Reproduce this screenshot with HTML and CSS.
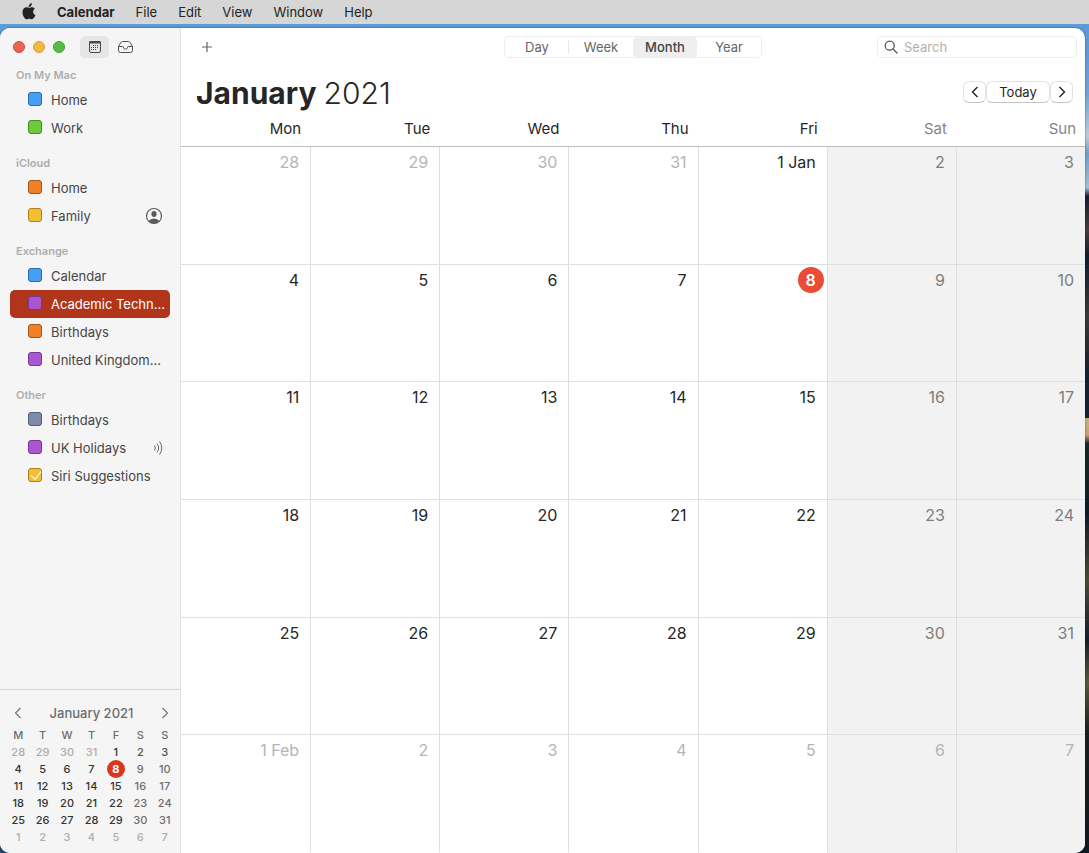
FILE: index.html
```html
<!DOCTYPE html>
<html lang="en-GB">

<head>
    <meta charset="UTF-8">
    <meta name="viewport" content="width=device-width, initial-scale=1">
    <title>Calendar</title>
    <link rel="stylesheet" href="styles.css">
</head>

<body>
    <nav class="menubar">
        <a href="#" class="apple" aria-label="Apple menu">
            <svg width="14" height="17" viewBox="0 0 14 17">
                <path d="M9.9 0.3c0.1 1-0.3 2-0.9 2.7C8.400 3.700 7.500 4.200 6.600 4.100 6.500 3.200 6.900 2.200 7.500 1.500 8.100 0.800 9.100 0.300 9.900 0.300z" />
                <path d="M7.200 4.900c0.700 0 1.500-0.700 2.800-0.700 1.200 0 2.300 0.600 2.900 1.600-2.600 1.500-2.200 5.100 0.500 6.200-0.600 1.700-2 4.300-3.500 4.300-1 0-1.400-0.600-2.600-0.600s-1.600 0.600-2.500 0.600C2.900 16.300 0.500 12.500 0.500 9.200c0-3.200 2-4.900 4-4.900 1.200 0 2.100 0.600 2.700 0.600z" />
            </svg>
        </a>
        <a href="#" class="app-name">Calendar</a>
        <a href="#">File</a>
        <a href="#">Edit</a>
        <a href="#">View</a>
        <a href="#">Window</a>
        <a href="#">Help</a>
    </nav>

    <div class="window">
        <aside class="sidebar">
            <div class="sidebar-head">
                <button type="button" class="light close" aria-label="Close"></button>
                <button type="button" class="light minimise" aria-label="Minimise"></button>
                <button type="button" class="light zoom" aria-label="Zoom"></button>
                <button type="button" class="head-btn list on" aria-label="Calendars">
                    <svg width="14" height="14" viewBox="0 0 14 14" fill="none" stroke="#4a4a4a">
                        <rect x="1.500" y="1.500" width="11" height="11" rx="1.500" />
                        <path d="M1 2.500h12" stroke-width="2" />
                        <path d="M5 5.500h6M3 7.500h8M3 9.500h6" stroke-dasharray="1 1" />
                    </svg>
                </button>
                <button type="button" class="head-btn" aria-label="Inbox">
                    <svg width="17" height="14" viewBox="0 0 17 14" fill="none" stroke="#4f4f4f" stroke-linejoin="round">
                        <path d="M1.500 6.500L3.800 2.600Q4.300 1.500 5.500 1.500h6Q12.700 1.500 13.200 2.600L15.500 6.500V10.500Q15.500 12.500 13.500 12.500h-10Q1.500 12.500 1.500 10.500z" />
                        <path d="M1.500 6.500h4.300q0.400 0 0.500 0.600Q6.700 9.200 8.500 9.200t2.200-2.100q0.100-0.600 0.500-0.600h4.300" />
                    </svg>
                </button>
            </div>

            <div class="lists">
                <section>
                    <h2>On My Mac</h2>
                    <label class="cal blue"><input type="checkbox"><span>Home</span></label>
                    <label class="cal green"><input type="checkbox"><span>Work</span></label>
                </section>
                <section>
                    <h2>iCloud</h2>
                    <label class="cal orange"><input type="checkbox"><span>Home</span></label>
                    <label class="cal yellow"><input type="checkbox"><span>Family</span>
                        <svg class="shared" width="18" height="18" viewBox="0 0 18 18">
                            <circle cx="9" cy="9" r="7.500" fill="none" stroke="#5a5a5a" stroke-width="1.200" />
                            <ellipse cx="9" cy="7" rx="2.600" ry="3" fill="#5a5a5a" />
                            <path d="M3.800 14Q5.200 11.500 9 11.500t5.200 2.500Q12 16.500 9 16.500t-5.200-2.500z" fill="#5a5a5a" />
                        </svg>
                    </label>
                </section>
                <section>
                    <h2>Exchange</h2>
                    <label class="cal blue"><input type="checkbox"><span>Calendar</span></label>
                    <label class="cal purple selected"><input type="checkbox"><span>Academic Techn...</span></label>
                    <label class="cal orange"><input type="checkbox"><span>Birthdays</span></label>
                    <label class="cal purple"><input type="checkbox"><span>United Kingdom...</span></label>
                </section>
                <section>
                    <h2>Other</h2>
                    <label class="cal slate"><input type="checkbox"><span>Birthdays</span></label>
                    <label class="cal purple"><input type="checkbox"><span>UK Holidays</span>
                        <svg class="feed" width="10" height="16" viewBox="0 0 10 16" fill="none" stroke="#666">
                            <path d="M1.500 5.500q1.800 2.500 0 5M4 3.500q3.200 4.500 0 9M6.500 1.500q4.600 6.500 0 13" />
                        </svg>
                    </label>
                    <label class="cal yellow"><input type="checkbox" checked><span>Siri Suggestions</span></label>
                </section>
            </div>

            <div class="mini">
                <div class="mini-head">
                    <button type="button" aria-label="Previous month">
                        <svg width="8" height="12" viewBox="0 0 8 12"><path d="M6.500 1L1.500 6l5 5" /></svg>
                    </button>
                    <span>January 2021</span>
                    <button type="button" aria-label="Next month">
                        <svg width="8" height="12" viewBox="0 0 8 12"><path d="M1.500 1l5 5-5 5" /></svg>
                    </button>
                </div>
                <table>
                    <thead>
                        <tr><th>M</th><th>T</th><th>W</th><th>T</th><th>F</th><th>S</th><th>S</th></tr>
                    </thead>
                    <tbody>
                        <tr><td class="out">28</td><td class="out">29</td><td class="out">30</td><td class="out">31</td><td>1</td><td>2</td><td>3</td></tr>
                        <tr><td>4</td><td>5</td><td>6</td><td>7</td><td><span class="today">8</span></td><td>9</td><td>10</td></tr>
                        <tr><td>11</td><td>12</td><td>13</td><td>14</td><td>15</td><td>16</td><td>17</td></tr>
                        <tr><td>18</td><td>19</td><td>20</td><td>21</td><td>22</td><td>23</td><td>24</td></tr>
                        <tr><td>25</td><td>26</td><td>27</td><td>28</td><td>29</td><td>30</td><td>31</td></tr>
                        <tr><td class="out">1</td><td class="out">2</td><td class="out">3</td><td class="out">4</td><td class="out">5</td><td class="out">6</td><td class="out">7</td></tr>
                    </tbody>
                </table>
            </div>
        </aside>

        <main>
            <div class="toolbar">
                <button type="button" class="add" aria-label="New event">
                    <svg width="12" height="12" viewBox="0 0 12 12"><path d="M6 1v10M1 6h10" stroke="#666" stroke-width="1.200" /></svg>
                </button>
                <div class="views">
                    <button type="button">Day</button>
                    <button type="button">Week</button>
                    <button type="button" class="on">Month</button>
                    <button type="button">Year</button>
                </div>
                <label class="search">
                    <svg width="14" height="14" viewBox="0 0 14 14" fill="none" stroke="#555" stroke-width="1.300" stroke-linecap="round">
                        <circle cx="5.700" cy="5.700" r="4.500" />
                        <path d="M9 9l4 4" />
                    </svg>
                    <input type="search" placeholder="Search" aria-label="Search">
                </label>
            </div>

            <header class="title">
                <h1>January <span>2021</span></h1>
                <div class="nav">
                    <button type="button" aria-label="Previous month">
                        <svg width="8" height="12" viewBox="0 0 8 12"><path d="M6.500 1L1.500 6l5 5" /></svg>
                    </button>
                    <button type="button" class="now">Today</button>
                    <button type="button" aria-label="Next month">
                        <svg width="8" height="12" viewBox="0 0 8 12"><path d="M1.500 1l5 5-5 5" /></svg>
                    </button>
                </div>
            </header>

            <div class="month">
                <table>
                    <thead>
                        <tr><th>Mon</th><th>Tue</th><th>Wed</th><th>Thu</th><th>Fri</th><th>Sat</th><th>Sun</th></tr>
                    </thead>
                    <tbody>
                        <tr><td class="out">28</td><td class="out">29</td><td class="out">30</td><td class="out">31</td><td>1 Jan</td><td>2</td><td>3</td></tr>
                        <tr><td>4</td><td>5</td><td>6</td><td>7</td><td><span class="today">8</span></td><td>9</td><td>10</td></tr>
                        <tr><td>11</td><td>12</td><td>13</td><td>14</td><td>15</td><td>16</td><td>17</td></tr>
                        <tr><td>18</td><td>19</td><td>20</td><td>21</td><td>22</td><td>23</td><td>24</td></tr>
                        <tr><td>25</td><td>26</td><td>27</td><td>28</td><td>29</td><td>30</td><td>31</td></tr>
                        <tr><td class="out">1 Feb</td><td class="out">2</td><td class="out">3</td><td class="out">4</td><td class="out">5</td><td class="out">6</td><td class="out">7</td></tr>
                    </tbody>
                </table>
            </div>
        </main>
    </div>
</body>

</html>
```

FILE: styles.css
```css
* {
    box-sizing: border-box;
}

body {
    margin: 0;
    height: 100vh;
    display: flex;
    flex-direction: column;
    font-family: Inter, "Liberation Sans", sans-serif;
    font-size: 13px;
    color: #262626;
    /* wallpaper: sky, headland, dark hillside */
    background:
        radial-gradient(circle at 0 100%, #1f4a70 0, #1f4a70 20px, transparent 21px),
        linear-gradient(#5b9bd9 0, #5b9bd9 6%, #6ea5d9 11%, #bccbd8 16%, #6d9fcc 18%, #a3bdd5 22%, #16202f 23%, #4a3a3c 27%, #101d2c 30%, #3a3a3a 37%, #14212e 44%, #132230 49%, #c8b27a 49%, #c8a070 51%, #1a2826 52%, #0e1b26 60%, #4b4a35 68%, #12202a 75%, #5e5637 80%, #16201f 86%, #0f1a22 100%);
}

button {
    font: inherit;
    color: inherit;
    padding: 0;
    border: 0;
    background: none;
    display: flex;
    align-items: center;
    justify-content: center;
}

h1,
h2 {
    margin: 0;
}

table {
    width: 100%;
    table-layout: fixed;
    border-collapse: separate;
    border-spacing: 0;
}

th,
td {
    padding: 0;
    font-weight: 400;
}

/* menu bar */
.menubar {
    height: 24px;
    flex: none;
    display: flex;
    align-items: center;
    gap: 21px;
    padding-left: 22px;
    background: #d6d6d6;
}

.menubar a {
    color: #222;
    text-decoration: none;
}

.menubar .apple {
    height: 17px;
    fill: #222;
    margin-bottom: 2px;
}

.menubar .app-name {
    font-weight: 700;
}

.window {
    flex: 1;
    min-height: 0;
    display: flex;
    margin: 4px 4px 0 0;
    border-radius: 10px;
    overflow: hidden;
    background: #fff;
    box-shadow: 0 0 2px rgba(0, 0, 0, 0.5);
}

/* sidebar */
.sidebar {
    width: 181px;
    flex: none;
    display: flex;
    flex-direction: column;
    background: #f5f5f5;
    border-right: 1px solid #e0e0e0;
}

.sidebar-head {
    height: 36px;
    padding: 2px 0 0 13px;
    display: flex;
    align-items: center;
    gap: 8px;
}

.light {
    width: 12px;
    height: 12px;
    border-radius: 50%;
    border: 1px solid #d64a3f;
    background: #ec6255;
}

.minimise {
    border-color: #d9a032;
    background: #f4b740;
}

.zoom {
    border-color: #43a035;
    background: #55bd47;
}

.head-btn {
    height: 22px;
}

.list {
    width: 29px;
    margin-left: 7px;
    border-radius: 5px;
}

.list.on {
    background: #e6e6e6;
}

.lists {
    flex: 1;
    padding: 0 10px;
}

.lists section {
    margin-bottom: 10px;
}

.lists h2 {
    padding-left: 6px;
    font-size: 11px;
    line-height: 22px;
    font-weight: 600;
    color: #adadad;
}

.cal {
    height: 28px;
    display: flex;
    align-items: center;
    padding: 0 7px 0 18px;
    gap: 9px;
    border-radius: 5px;
    color: #454545;
    white-space: nowrap;
}

.cal span {
    flex: 1;
}

.cal input {
    appearance: none;
    flex: none;
    width: 14px;
    height: 14px;
    margin: 0 0 2px;
    border: 1px solid;
    border-radius: 3px;
}

.cal input:checked::after {
    content: "";
    display: block;
    width: 5px;
    height: 9px;
    margin: 0 0 0 4px;
    border: solid #fff;
    border-width: 0 1px 1px 0;
    transform: rotate(38deg);
}

.blue input {
    background: #459ff3;
    border-color: #2a6cab;
}

.green input {
    background: #6dcb3b;
    border-color: #468a25;
}

.orange input {
    background: #ed8028;
    border-color: #a3571b;
}

.yellow input {
    background: #f3bf32;
    border-color: #a98220;
}

.purple input {
    background: #aa55d2;
    border-color: #743a92;
}

.slate input {
    background: #7b8ba8;
    border-color: #505f78;
}

.cal.selected {
    background: #b0351b;
    color: #fff;
}

.cal svg {
    flex: none;
}

/* month picker under the lists */
.mini {
    padding: 10px 3px 7px 6px;
    border-top: 1px solid #d5d5d5;
    color: #333;
}

.mini-head {
    height: 26px;
    padding: 0 8px;
    display: flex;
    align-items: center;
    justify-content: space-between;
    font-weight: 500;
    color: #6d6d6d;
}

.mini-head path {
    fill: none;
    stroke: #777;
    stroke-width: 1.2;
}

.mini th,
.mini td {
    height: 17px;
    font-size: 11px;
    line-height: 17px;
    font-weight: 500;
    text-align: center;
}

.mini th {
    height: 18px;
    color: #6d6d6d;
}

.mini td:nth-child(n + 6) {
    color: #6d6d6d;
}

.mini tr:first-child td:nth-child(n + 6) {
    color: #4d4d4d;
}

.mini td.out.out {
    color: #adadad;
}

.mini .today {
    display: block;
    width: 18px;
    height: 18px;
    line-height: 18px;
    margin: -1px auto 0;
    border-radius: 50%;
    background: #d93820;
    color: #fff;
    font-weight: 700;
}

/* main pane */
main {
    flex: 1;
    min-width: 0;
    display: flex;
    flex-direction: column;
}

.toolbar {
    height: 38px;
    display: grid;
    grid-template-columns: 1fr auto 1fr;
    align-items: center;
    padding: 0 8px 0 20px;
}

.add {
    justify-self: start;
}

.views {
    display: flex;
    height: 22px;
    margin-right: 12px;
    border: 1px solid #ededed;
    border-radius: 5px;
    color: #666;
}

.views button {
    width: 64px;
}

.views button:first-child {
    background: linear-gradient(#e8e8e8, #e8e8e8) right center / 1px 14px no-repeat;
}

.views .on {
    background: #efefef;
    border-radius: 4px;
    font-weight: 500;
    color: #444;
}

.search {
    justify-self: end;
    width: 200px;
    height: 22px;
    display: flex;
    align-items: center;
    gap: 6px;
    padding: 0 6px;
    border: 1px solid #ececec;
    border-radius: 5px;
}

.search input {
    flex: 1;
    min-width: 0;
    padding: 0;
    border: 0;
    outline: 0;
    background: none;
    font: inherit;
}

.search input::placeholder {
    color: #b0b0b0;
}

.title {
    height: 51px;
    display: flex;
    align-items: center;
    justify-content: space-between;
    padding: 0 12px 0 15px;
}

.title h1 {
    padding-top: 2px;
    font-size: 30px;
    line-height: 40px;
    font-weight: 700;
}

.title h1 span {
    font-weight: 300;
}

.nav {
    display: flex;
}

.nav button {
    width: 23px;
    height: 22px;
    border: 1px solid #e2e2e2;
    border-bottom-color: #c4c4c4;
    border-radius: 6px;
    background: #fff;
}

.nav .now {
    width: 64px;
}

.nav path {
    fill: none;
    stroke: #222;
    stroke-width: 1.4;
}

.month {
    flex: 1;
    min-height: 0;
}

.month table {
    height: 100%;
}

.month th {
    height: 30px;
    padding: 0 9px 5px 0;
    border-bottom: 1px solid #bdbdbd;
    font-size: 15px;
    line-height: 24px;
    text-align: right;
}

.month td {
    padding: 2px 11px 0 0;
    border-bottom: 1px solid #dfdfdf;
    font-size: 16px;
    line-height: 26px;
    text-align: right;
    vertical-align: top;
}

.month td + td {
    border-left: 1px solid #dfdfdf;
}

.month tr:last-child td {
    border-bottom-color: transparent;
}

.month th:nth-child(n + 6) {
    color: #858585;
}

.month td:nth-child(n + 6) {
    background: #f2f2f2;
    color: #7d7d7d;
}

.month td.out.out {
    color: #b5b5b5;
}

.month .today {
    display: block;
    width: 26px;
    height: 26px;
    margin: 0 -8px 0 auto;
    border-radius: 50%;
    background: #ea4b35;
    color: #fff;
    font-weight: 600;
    text-align: center;
}
```
